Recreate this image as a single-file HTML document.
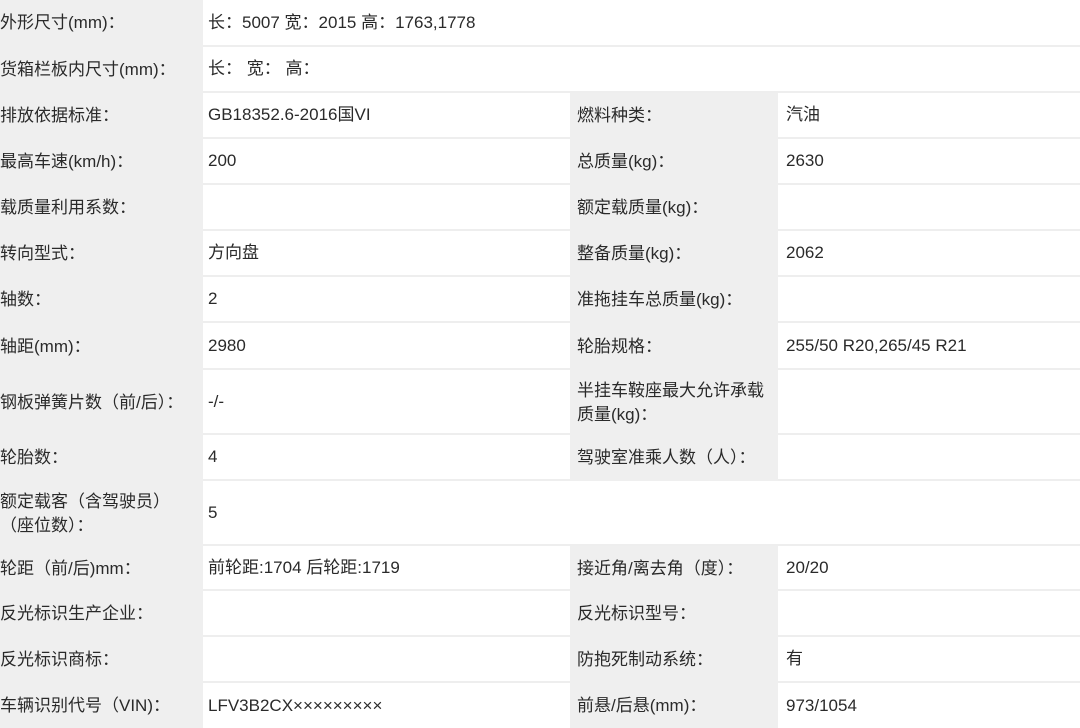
<!DOCTYPE html>
<html><head><meta charset="utf-8"><style>
body{margin:0;width:1080px;height:728px;background:#efefef;font-family:"Liberation Sans","Noto Sans CJK SC",sans-serif;font-size:17px;color:#2a2a2a;position:relative;overflow:hidden}
.c{position:absolute;display:flex;align-items:center;box-sizing:border-box;line-height:24px;white-space:nowrap}
.w{background:#fff;border-bottom:2px solid #eeeeee}
.g{background:#efefef}
</style></head><body>
<div class="c g" style="left:0;top:0;width:202px;height:46px">外形尺寸(mm)：</div>
<div class="c w" style="left:203px;top:0;width:877px;height:47px;padding-left:5px">长：5007 宽：2015 高：1763,1778</div>
<div class="c g" style="left:0;top:47px;width:202px;height:46px">货箱栏板内尺寸(mm)：</div>
<div class="c w" style="left:203px;top:47px;width:877px;height:46px;padding-left:5px">长： 宽： 高：</div>

<div class="c g" style="left:0;top:93px;width:202px;height:46px">排放依据标准：</div>
<div class="c w" style="left:203px;top:93px;width:367px;height:46px;padding-left:5px">GB18352.6-2016国VI</div>
<div class="c g" style="left:570px;top:93px;width:208px;height:46px;padding-left:7px">燃料种类：</div>
<div class="c w" style="left:778px;top:93px;width:302px;height:46px;padding-left:8px">汽油</div>

<div class="c g" style="left:0;top:139px;width:202px;height:46px">最高车速(km/h)：</div>
<div class="c w" style="left:203px;top:139px;width:367px;height:46px;padding-left:5px">200</div>
<div class="c g" style="left:570px;top:139px;width:208px;height:46px;padding-left:7px">总质量(kg)：</div>
<div class="c w" style="left:778px;top:139px;width:302px;height:46px;padding-left:8px">2630</div>

<div class="c g" style="left:0;top:185px;width:202px;height:46px">载质量利用系数：</div>
<div class="c w" style="left:203px;top:185px;width:367px;height:46px;padding-left:5px"></div>
<div class="c g" style="left:570px;top:185px;width:208px;height:46px;padding-left:7px">额定载质量(kg)：</div>
<div class="c w" style="left:778px;top:185px;width:302px;height:46px;padding-left:8px"></div>

<div class="c g" style="left:0;top:231px;width:202px;height:46px">转向型式：</div>
<div class="c w" style="left:203px;top:231px;width:367px;height:46px;padding-left:5px">方向盘</div>
<div class="c g" style="left:570px;top:231px;width:208px;height:46px;padding-left:7px">整备质量(kg)：</div>
<div class="c w" style="left:778px;top:231px;width:302px;height:46px;padding-left:8px">2062</div>

<div class="c g" style="left:0;top:277px;width:202px;height:46px">轴数：</div>
<div class="c w" style="left:203px;top:277px;width:367px;height:46px;padding-left:5px">2</div>
<div class="c g" style="left:570px;top:277px;width:208px;height:46px;padding-left:7px">准拖挂车总质量(kg)：</div>
<div class="c w" style="left:778px;top:277px;width:302px;height:46px;padding-left:8px"></div>

<div class="c g" style="left:0;top:323px;width:202px;height:47px">轴距(mm)：</div>
<div class="c w" style="left:203px;top:323px;width:367px;height:47px;padding-left:5px">2980</div>
<div class="c g" style="left:570px;top:323px;width:208px;height:47px;padding-left:7px">轮胎规格：</div>
<div class="c w" style="left:778px;top:323px;width:302px;height:47px;padding-left:8px">255/50 R20,265/45 R21</div>

<div class="c g" style="left:0;top:370px;width:202px;height:65px">钢板弹簧片数（前/后）：</div>
<div class="c w" style="left:203px;top:370px;width:367px;height:65px;padding-left:5px">-/-</div>
<div class="c g" style="left:570px;top:370px;width:208px;height:65px;padding-left:7px">半挂车鞍座最大允许承载<br>质量(kg)：</div>
<div class="c w" style="left:778px;top:370px;width:302px;height:65px;padding-left:8px"></div>

<div class="c g" style="left:0;top:435px;width:202px;height:46px">轮胎数：</div>
<div class="c w" style="left:203px;top:435px;width:367px;height:46px;padding-left:5px">4</div>
<div class="c g" style="left:570px;top:435px;width:208px;height:46px;padding-left:7px">驾驶室准乘人数（人）：</div>
<div class="c w" style="left:778px;top:435px;width:302px;height:46px;padding-left:8px"></div>

<div class="c g" style="left:0;top:481px;width:202px;height:65px">额定载客（含驾驶员）<br>（座位数）：</div>
<div class="c w" style="left:203px;top:481px;width:877px;height:65px;padding-left:5px">5</div>

<div class="c g" style="left:0;top:546px;width:202px;height:45px">轮距（前/后)mm：</div>
<div class="c w" style="left:203px;top:546px;width:367px;height:45px;padding-left:5px">前轮距:1704 后轮距:1719</div>
<div class="c g" style="left:570px;top:546px;width:208px;height:45px;padding-left:7px">接近角/离去角（度）：</div>
<div class="c w" style="left:778px;top:546px;width:302px;height:45px;padding-left:8px">20/20</div>

<div class="c g" style="left:0;top:591px;width:202px;height:46px">反光标识生产企业：</div>
<div class="c w" style="left:203px;top:591px;width:367px;height:46px;padding-left:5px"></div>
<div class="c g" style="left:570px;top:591px;width:208px;height:46px;padding-left:7px">反光标识型号：</div>
<div class="c w" style="left:778px;top:591px;width:302px;height:46px;padding-left:8px"></div>

<div class="c g" style="left:0;top:637px;width:202px;height:46px">反光标识商标：</div>
<div class="c w" style="left:203px;top:637px;width:367px;height:46px;padding-left:5px"></div>
<div class="c g" style="left:570px;top:637px;width:208px;height:46px;padding-left:7px">防抱死制动系统：</div>
<div class="c w" style="left:778px;top:637px;width:302px;height:46px;padding-left:8px">有</div>

<div class="c g" style="left:0;top:683px;width:202px;height:45px">车辆识别代号（VIN)：</div>
<div class="c w" style="left:203px;top:683px;width:367px;height:45px;padding-left:5px;border:0">LFV3B2CX×××××××××</div>
<div class="c g" style="left:570px;top:683px;width:208px;height:45px;padding-left:7px">前悬/后悬(mm)：</div>
<div class="c w" style="left:778px;top:683px;width:302px;height:45px;padding-left:8px;border:0">973/1054</div>
</body></html>
